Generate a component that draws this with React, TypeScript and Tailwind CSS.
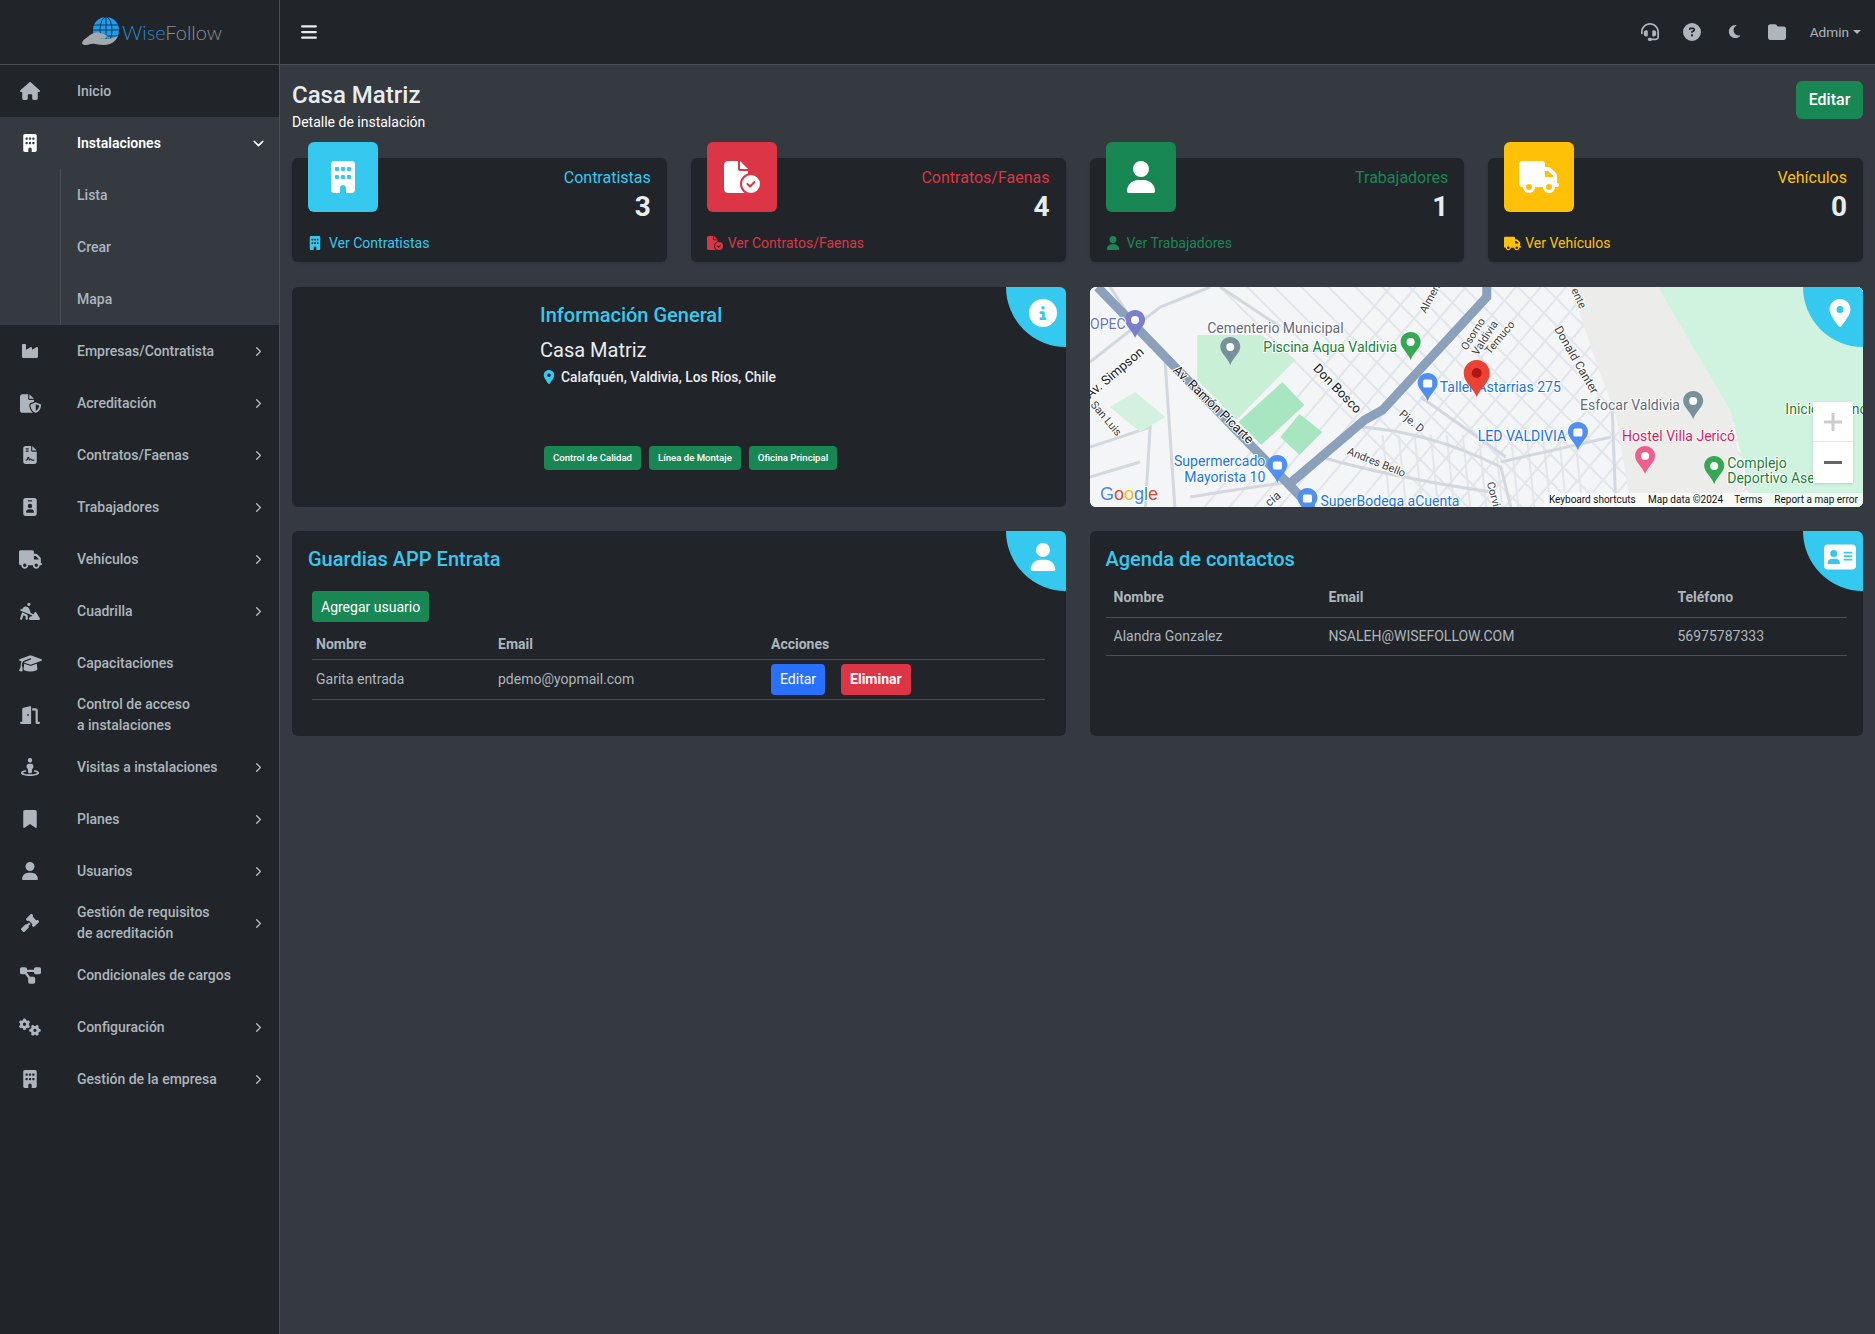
import type { ReactNode } from "react";
import { ChevronDown, ChevronRight } from "lucide-react";
import {
  FaAddressCard,
  FaBars,
  FaBookmark,
  FaBuilding,
  FaCircleInfo,
  FaCircleQuestion,
  FaDiagramProject,
  FaDoorOpen,
  FaFileCircleCheck,
  FaFileContract,
  FaFileShield,
  FaFolder,
  FaGavel,
  FaGears,
  FaGraduationCap,
  FaHeadset,
  FaHouse,
  FaIdBadge,
  FaIndustry,
  FaLocationDot,
  FaMoon,
  FaPersonDigging,
  FaStreetView,
  FaTruck,
  FaUser,
} from "react-icons/fa6";

type NavItem = { icon: ReactNode; label: ReactNode; arrow?: boolean };

const navAfter: NavItem[] = [
  { icon: <FaIndustry size={18} />, label: "Empresas/Contratista", arrow: true },
  { icon: <FaFileShield size={21} />, label: "Acreditación", arrow: true },
  { icon: <FaFileContract size={18} />, label: "Contratos/Faenas", arrow: true },
  { icon: <FaIdBadge size={18} />, label: "Trabajadores", arrow: true },
  { icon: <FaTruck size={23} />, label: "Vehículos", arrow: true },
  { icon: <FaPersonDigging size={20} />, label: "Cuadrilla", arrow: true },
  { icon: <FaGraduationCap size={23} />, label: "Capacitaciones" },
  { icon: <FaDoorOpen size={20} />, label: <>Control de acceso<br />a instalaciones</> },
  { icon: <FaStreetView size={18} />, label: "Visitas a instalaciones", arrow: true },
  { icon: <FaBookmark size={18} />, label: "Planes", arrow: true },
  { icon: <FaUser size={18} />, label: "Usuarios", arrow: true },
  { icon: <FaGavel size={18} />, label: <>Gestión de requisitos<br />de acreditación</>, arrow: true },
  { icon: <FaDiagramProject size={21} />, label: "Condicionales de cargos" },
  { icon: <FaGears size={22} />, label: "Configuración", arrow: true },
  { icon: <FaBuilding size={18} />, label: "Gestión de la empresa", arrow: true },
];

function NavRow({ icon, label, arrow }: NavItem) {
  return (
    <div className="flex h-[52px] items-center text-[#adb5bd]">
      <span className="flex w-[60px] shrink-0 justify-center">{icon}</span>
      <span className="ml-[17px] flex-1 text-sm font-medium leading-[21px]">{label}</span>
      {arrow && <ChevronRight size={15} strokeWidth={2.2} className="mr-[13px]" />}
    </div>
  );
}

function Logo() {
  return (
    <div className="flex items-center justify-center pl-6">
      <svg width="42" height="32" viewBox="0 0 42 32" className="-mr-px mt-[1px]">
        <circle cx="25" cy="14" r="13" fill="#1f9cee" />
        <g fill="none" stroke="#173a55" strokeWidth="1">
          <ellipse cx="25" cy="14" rx="6" ry="13" />
          <path d="M25 1v26M13 9h24M12 14h26M13 20h24" />
        </g>
        <path
          d="M1 27c1-4 5-5 8-8 3-2 6-3 10-2l6 2c2 1 1 3-2 3l-5 0 8 1c4 0 8-2 11-3-2 5-7 9-14 9-6 0-9-2-13-1-4 1-8 2-9-1z"
          fill="#a5a8aa"
        />
      </svg>
      <span className="font-[Lato,sans-serif] text-xl font-light leading-none">
        <span className="text-[#2d87c8]">Wise</span>
        <span className="text-[#8b9096]">Follow</span>
      </span>
    </div>
  );
}

function Sidebar() {
  return (
    <aside className="w-[280px] shrink-0 border-r border-[#4a4f55] bg-[#212529]">
      <div className="flex h-[65px] items-center justify-center border-b border-[#4a4f55] pb-px">
        <Logo />
      </div>
      <NavRow icon={<FaHouse size={20} />} label="Inicio" />
      <div className="bg-[#343a40]">
        <div className="flex h-[52px] items-center text-white">
          <span className="flex w-[60px] shrink-0 justify-center">
            <FaBuilding size={18} />
          </span>
          <span className="ml-[17px] flex-1 text-sm font-semibold">Instalaciones</span>
          <ChevronDown size={17} strokeWidth={2.2} className="mr-3" />
        </div>
        <div className="ml-[60px] border-l border-[#4a4f55] pl-4 text-sm font-medium text-[#adb5bd]">
          <div className="flex h-[52px] items-center">Lista</div>
          <div className="flex h-[52px] items-center">Crear</div>
          <div className="flex h-[52px] items-center">Mapa</div>
        </div>
      </div>
      {navAfter.map((item, i) => (
        <NavRow key={i} {...item} />
      ))}
    </aside>
  );
}

function TopBar() {
  return (
    <header className="flex h-[65px] items-center border-b border-[#4a4f55] bg-[#212529] pl-5 pr-[14px]">
      <FaBars size={18} className="text-[#e9ecef]" />
      <div className="ml-auto flex items-center text-[#adb5bd]">
        <span className="flex w-[42.5px] justify-center"><FaHeadset size={18} /></span>
        <span className="flex w-[42.5px] justify-center"><FaCircleQuestion size={18} /></span>
        <span className="flex w-[42.5px] justify-center"><FaMoon size={15} /></span>
        <span className="flex w-[42.5px] justify-center"><FaFolder size={18} /></span>
        <span className="ml-[11px] text-[13.6px]">Admin</span>
        <span className="ml-1 mt-px h-0 w-0 border-x-[4px] border-t-[4px] border-x-transparent border-t-[#adb5bd]" />
      </div>
    </header>
  );
}

type Stat = {
  title: string;
  value: string;
  link: string;
  box: string;
  text: string;
  big: ReactNode;
  small: ReactNode;
};

const stats: Stat[] = [
  {
    title: "Contratistas",
    value: "3",
    link: "Ver Contratistas",
    box: "bg-[#36c9f0]",
    text: "text-[#36c9f0]",
    big: <FaBuilding size={32} />,
    small: <FaBuilding size={14} className="mr-[2px]" />,
  },
  {
    title: "Contratos/Faenas",
    value: "4",
    link: "Ver Contratos/Faenas",
    box: "bg-[#dc3545]",
    text: "text-[#dc3545]",
    big: <FaFileCircleCheck size={36} />,
    small: <FaFileCircleCheck size={16} />,
  },
  {
    title: "Trabajadores",
    value: "1",
    link: "Ver Trabajadores",
    box: "bg-[#198754]",
    text: "text-[#198754]",
    big: <FaUser size={32} />,
    small: <FaUser size={14} className="mr-[2px]" />,
  },
  {
    title: "Vehículos",
    value: "0",
    link: "Ver Vehículos",
    box: "bg-[#ffc107]",
    text: "text-[#ffc107]",
    big: <FaTruck size={40} />,
    small: <FaTruck size={17} className="-mr-px" />,
  },
];

function StatCard({ s }: { s: Stat }) {
  return (
    <div className="relative rounded-md bg-[#212529] px-4 pb-[9px] pt-2 shadow-sm">
      <div className={`absolute -top-4 left-4 flex h-[70px] w-[70px] items-center justify-center rounded-md text-white ${s.box}`}>
        {s.big}
      </div>
      <div className={`text-right text-base leading-6 ${s.text}`}>{s.title}</div>
      <div className="text-right text-[28px] font-bold leading-[34px] text-[#e9ecef]">{s.value}</div>
      <div className={`mt-[9px] flex h-5 items-center gap-[5px] text-sm leading-5 ${s.text}`}>
        {s.small}
        <span>{s.link}</span>
      </div>
    </div>
  );
}

function Corner({ children }: { children: ReactNode }) {
  return (
    <div className="absolute right-0 top-0 flex h-[60px] w-[60px] items-center justify-center rounded-bl-full bg-[#36c9f0] pb-2 pl-[14px] text-white">
      {children}
    </div>
  );
}

const tags = ["Control de Calidad", "Línea de Montaje", "Oficina Principal"];

function InfoCard() {
  return (
    <div className="relative h-[220px] overflow-hidden rounded-md bg-[#212529] pl-[248px] pt-4">
      <Corner>
        <FaCircleInfo size={28} />
      </Corner>
      <h3 className="text-xl font-medium leading-6 text-[#36c9f0]">Información General</h3>
      <p className="mt-[11px] text-xl leading-6 text-[#e9ecef]">Casa Matriz</p>
      <p className="mt-[5px] flex h-5 items-center text-[13.8px] font-medium text-[#e9ecef]">
        <FaLocationDot size={14} className="ml-[2px] mr-[5px] text-[#36c9f0]" />
        Calafquén, Valdivia, Los Ríos, Chile
      </p>
      <div className="ml-1 mt-[59px] flex gap-2">
        {tags.map((t) => (
          <span key={t} className="flex h-6 items-center rounded bg-[#198754] px-[9px] text-[9.6px] font-medium text-white">
            {t}
          </span>
        ))}
      </div>
    </div>
  );
}

// street grid for the map, two diagonal families plus a few long curves
const streetsA = Array.from({ length: 16 }, (_, i) => {
  const x = 120 + i * 27;
  return `M${x} ${-10}L${x + 235} 225`;
});
const streetsB = Array.from({ length: 24 }, (_, i) => {
  const x = 110 + i * 25;
  return `M${x} 225L${x + 190} 0`;
});
const streetsC = Array.from({ length: 13 }, (_, i) => {
  const x = 292 + i * 16;
  return `M${x} 148L${x + 8} 225`;
});
const streetsD = [
  "M0 75L70 20L120 0",
  "M0 160L60 140L55 225",
  "M75 75L85 225",
  "M20 0L60 60",
  "M0 190L50 175",
  "M130 0L190 40",
  "M270 140Q340 145 410 180L420 220",
  "M410 175L520 150",
  "M230 170Q300 190 400 205",
  "M330 110L415 170",
  "M520 90L525 225",
  "M100 210Q160 200 200 195",
];

function MapPin({ x, y, color, children }: { x: number; y: number; color: string; children?: ReactNode }) {
  return (
    <g transform={`translate(${x - 10} ${y})`}>
      <path d="M10 0C4.500 0 0 4.300 0 9.700 0 16 7 20 10 28c3-8 10-12 10-18.300C20 4.300 15.500 0 10 0z" fill={color} />
      {children ?? <circle cx="10" cy="10" r="4" fill="#fff" />}
    </g>
  );
}

const bag = <rect x="5.500" y="6.500" width="9" height="8" rx="1.500" fill="#fff" />;

function MapLabel({ x, y, fill, children, anchor }: { x: number; y: number; fill: string; children: ReactNode; anchor?: "end" }) {
  return (
    <text x={x} y={y} fill={fill} fontSize="14" textAnchor={anchor} stroke="#fff" strokeWidth="2" paintOrder="stroke">
      {children}
    </text>
  );
}

function Rot({ x, y, r, size = 12, fill = "#3c4043", children }: { x: number; y: number; r: number; size?: number; fill?: string; children: ReactNode }) {
  return (
    <text transform={`translate(${x} ${y}) rotate(${r})`} fontSize={size} fill={fill} stroke="#fff" strokeWidth="2" paintOrder="stroke">
      {children}
    </text>
  );
}

function MapCard() {
  return (
    <div className="relative h-[220px] overflow-hidden rounded-md bg-[#f3f5f7]">
      <svg viewBox="0 0 772 220" className="block h-full w-full font-[Roboto,sans-serif]" preserveAspectRatio="none">
        <rect width="772" height="220" fill="#f3f5f7" />
        <g fill="none" stroke="#e2e5ea" strokeWidth="2">
          {streetsA.map((d) => <path key={d} d={d} />)}
          {streetsB.map((d) => <path key={d} d={d} />)}
          {streetsC.map((d) => <path key={d} d={d} />)}
        </g>
        <g fill="none" stroke="#d3d8df" strokeWidth="3">
          {streetsD.map((d) => <path key={d} d={d} />)}
        </g>
        <path d="M480 0H572L640 125L655 220H540L525 130L500 60z" fill="#ececea" />
        <path d="M567 0H772V220H662L640 125z" fill="#cff3de" />
        <path d="M107 48H171L205 73L146 133L107 93z" fill="#c9efd7" />
        <path d="M192 95L214 118L171 158L148 135z" fill="#a8e6c1" />
        <path d="M209 127L232 145L209 168L190 150z" fill="#a8e6c1" />
        <path d="M20 120L45 105L75 130L50 145z" fill="#d3f1de" />
        <path d="M7.500 0L201 200L222 222" fill="none" stroke="#8aa0bb" strokeWidth="9" />
        <path d="M396 0V10L292 123L274 133L199 197" fill="none" stroke="#8aa0bb" strokeWidth="9" />

        <Rot x={82} y={84} r={44} size={13} fill="#202124">Av. Ramón Picarte</Rot>
        <Rot x={222} y={82} r={46} size={13} fill="#202124">Don Bosco</Rot>
        <Rot x={0} y={112} r={-40} size={13} fill="#202124">Av. Simpson</Rot>
        <Rot x={0} y={118} r={50} size={11}>San Luis</Rot>
        <Rot x={308} y={128} r={40} size={11}>Pje. D</Rot>
        <Rot x={256} y={167} r={22} size={11}>Andres Bello</Rot>
        <Rot x={463} y={42} r={60} size={12}>Donald Canter</Rot>
        <Rot x={335} y={27} r={-62} size={11}>Almen</Rot>
        <Rot x={376} y={64} r={-58} size={11}>Osorno</Rot>
        <Rot x={387} y={69} r={-58} size={11}>Valdivia</Rot>
        <Rot x={399} y={68} r={-50} size={11}>Temuco</Rot>
        <Rot x={480} y={3} r={65} size={11}>ente</Rot>
        <Rot x={396} y={196} r={75} size={11}>Corvi</Rot>
        <Rot x={179} y={220} r={-40} size={12}>cia</Rot>

        <MapPin x={45} y={23} color="#7b7fcb" />
        <MapLabel x={0} y={42} fill="#6b6fc5">OPEC</MapLabel>
        <MapLabel x={117} y={46} fill="#5f6b7a">Cementerio Municipal</MapLabel>
        <MapPin x={140} y={50} color="#78909c" />
        <MapLabel x={173} y={65} fill="#188038">Piscina Aqua Valdivia</MapLabel>
        <MapPin x={320} y={45} color="#34a853" />
        <MapPin x={337} y={86} color="#4f8ff0">{bag}</MapPin>
        <MapLabel x={349} y={105} fill="#1a73e8">Taller Astarrias 275</MapLabel>
        <MapLabel x={489} y={123} fill="#5f6b7a">Esfocar Valdivia</MapLabel>
        <MapPin x={602} y={104} color="#78909c" />
        <MapLabel x={694} y={127} fill="#188038">Inicio Urbano</MapLabel>
        <MapLabel x={387} y={154} fill="#1a73e8">LED VALDIVIA</MapLabel>
        <MapPin x={487} y={135} color="#4f8ff0">{bag}</MapPin>
        <MapLabel x={531} y={154} fill="#d81b60">Hostel Villa Jericó</MapLabel>
        <MapPin x={554} y={159} color="#ee5f8f" />
        <MapPin x={623} y={169} color="#34a853" />
        <MapLabel x={636} y={181} fill="#188038">Complejo</MapLabel>
        <MapLabel x={636} y={196} fill="#188038">Deportivo Ase</MapLabel>
        <MapLabel x={175} y={179} fill="#1a73e8" anchor="end">Supermercado</MapLabel>
        <MapLabel x={175} y={195} fill="#1a73e8" anchor="end">Mayorista 10</MapLabel>
        <MapPin x={187} y={168} color="#4f8ff0">{bag}</MapPin>
        <MapPin x={217} y={201} color="#4f8ff0">{bag}</MapPin>
        <MapLabel x={230} y={219} fill="#1a73e8">SuperBodega aCuenta</MapLabel>

        <g transform="translate(373 73)">
          <path d="M13 0C5.800 0 0 5.800 0 13c0 10 9 14 13 24 4-10 13-14 13-24C26 5.800 20.200 0 13 0z" fill="#ea4335" />
          <circle cx="13" cy="13" r="5" fill="#b31412" />
        </g>

        <text x="10" y="213" fontSize="18" fontWeight="500" stroke="#fff" strokeWidth="2" paintOrder="stroke" fontFamily="Liberation Sans, sans-serif">
          <tspan fill="#4285f4">G</tspan>
          <tspan fill="#ea4335">o</tspan>
          <tspan fill="#fbbc05">o</tspan>
          <tspan fill="#4285f4">g</tspan>
          <tspan fill="#34a853">l</tspan>
          <tspan fill="#ea4335">e</tspan>
        </text>
        <rect x="453" y="206" width="319" height="14" fill="#fff" fillOpacity="0.7" />
        <g fontSize="10" fill="#111">
          <text x="458" y="216.500">Keyboard shortcuts</text>
          <text x="557" y="216.500">Map data ©2024</text>
          <text x="643" y="216.500">Terms</text>
          <text x="683" y="216.500">Report a map error</text>
        </g>
      </svg>
      <div className="absolute left-[723px] top-[115px] flex h-[81px] w-10 flex-col items-center bg-white shadow">
        <div className="flex h-10 w-full items-center justify-center border-b border-[#e6e6e6]">
          <svg width="18" height="18" viewBox="0 0 18 18"><path d="M7.500 0h3v7.500H18v3h-7.500V18h-3v-7.500H0v-3h7.500z" fill="#ccc" /></svg>
        </div>
        <div className="flex flex-1 items-center justify-center">
          <div className="h-[3px] w-[18px] bg-[#666]" />
        </div>
      </div>
      <Corner>
        <FaLocationDot size={28} />
      </Corner>
    </div>
  );
}

function Button({ color, bold, children }: { color: string; bold?: boolean; children: ReactNode }) {
  return (
    <span className={`flex h-[31px] w-fit items-center rounded px-[9px] text-sm text-white ${color} ${bold ? "font-bold" : "font-normal"}`}>
      {children}
    </span>
  );
}

function GuardiasCard() {
  return (
    <div className="relative h-[205px] overflow-hidden rounded-md bg-[#212529] px-4 pt-4">
      <Corner>
        <FaUser size={28} />
      </Corner>
      <h3 className="text-xl font-medium leading-6 text-[#36c9f0]">Guardias APP Entrata</h3>
      <div className="ml-1 mt-5">
        <Button color="bg-[#198754]">Agregar usuario</Button>
      </div>
      <table className="ml-1 mt-[7px] w-[733px] table-fixed text-left text-sm text-[#adb5bd]">
        <thead>
          <tr className="border-b border-[#495057]">
            <th className="h-[30px] w-[182px] pl-1 font-bold">Nombre</th>
            <th className="w-[273px] pl-1 font-bold">Email</th>
            <th className="pl-1 font-bold">Acciones</th>
          </tr>
        </thead>
        <tbody>
          <tr className="border-b border-[#495057]">
            <td className="h-10 pl-1">Garita entrada</td>
            <td className="pl-1">pdemo@yopmail.com</td>
            <td className="pl-1">
              <div className="flex gap-4">
                <Button color="bg-[#2970ff]">Editar</Button>
                <Button color="bg-[#dc3545]" bold>Eliminar</Button>
              </div>
            </td>
          </tr>
        </tbody>
      </table>
    </div>
  );
}

function AgendaCard() {
  return (
    <div className="relative h-[205px] overflow-hidden rounded-md bg-[#212529] px-4 pt-4">
      <Corner>
        <FaAddressCard size={32} />
      </Corner>
      <h3 className="text-xl font-medium leading-6 text-[#36c9f0]">Agenda de contactos</h3>
      <table className="mt-[7px] w-[741px] table-fixed text-left text-sm text-[#adb5bd]">
        <thead>
          <tr className="border-b border-[#495057]">
            <th className="h-[39px] w-[215px] pl-2 font-bold">Nombre</th>
            <th className="w-[349px] pl-2 font-bold">Email</th>
            <th className="pl-2 font-bold">Teléfono</th>
          </tr>
        </thead>
        <tbody>
          <tr className="border-b border-[#495057]">
            <td className="h-[38px] pl-2">Alandra Gonzalez</td>
            <td className="pl-2">NSALEH@WISEFOLLOW.COM</td>
            <td className="pl-2">56975787333</td>
          </tr>
        </tbody>
      </table>
    </div>
  );
}

export default function App() {
  return (
    <div className="flex min-h-screen bg-[#343a40] font-[Roboto,sans-serif]">
      <Sidebar />
      <main className="min-w-0 flex-1">
        <TopBar />
        <div className="px-3 pt-4">
          <div className="flex items-start justify-between">
            <div>
              <h1 className="text-2xl font-medium leading-7 text-[#e9ecef]">Casa Matriz</h1>
              <p className="mt-[3px] text-sm leading-5 text-white">Detalle de instalación</p>
            </div>
            <span className="flex h-[38px] w-[67px] items-center justify-center rounded-md bg-[#198754] text-base font-medium text-white">Editar</span>
          </div>
          <div className="mt-[26px] grid grid-cols-4 gap-6">
            {stats.map((s) => (
              <StatCard key={s.title} s={s} />
            ))}
          </div>
          <div className="mt-[25px] grid grid-cols-2 gap-6">
            <InfoCard />
            <MapCard />
            <GuardiasCard />
            <AgendaCard />
          </div>
        </div>
      </main>
    </div>
  );
}
